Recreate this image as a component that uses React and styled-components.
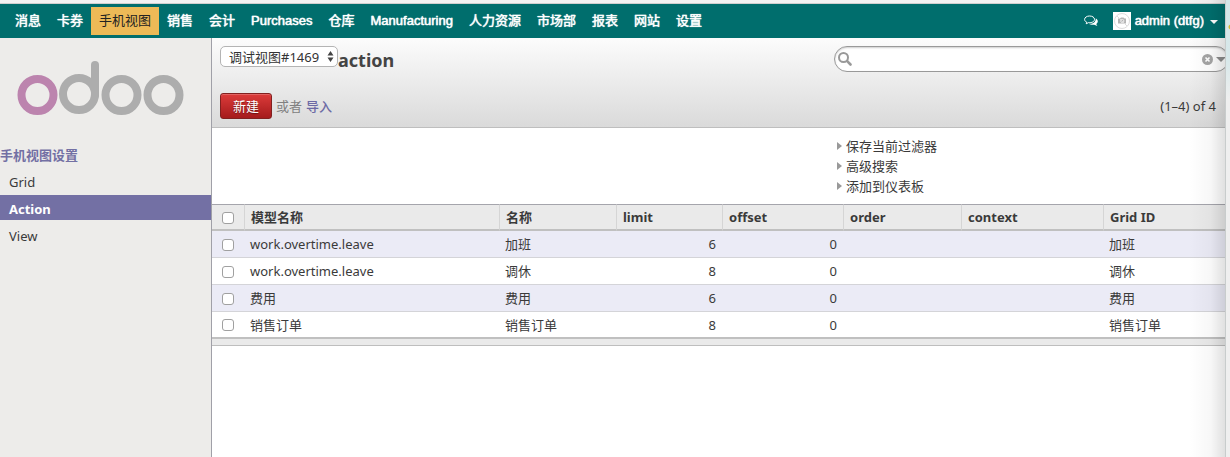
import React from "react";
import styled, { createGlobalStyle, css } from "styled-components";

const GlobalStyle = createGlobalStyle`
  * { box-sizing: border-box; }
  body {
    margin: 0;
    background: #fff;
    color: #3a3a3a;
    font: 13px/20px "Noto Sans", "Noto Sans CJK SC", sans-serif;
  }
  a { color: inherit; text-decoration: none; }
`;

const Window = styled.div`
  display: grid;
  grid-template-columns: minmax(0, 1fr) 5px;
  min-height: 100vh;
`;

const Page = styled.div`
  position: relative;
  display: flex;
  flex-direction: column;
  overflow: hidden;
`;

const EdgeShade = styled.div`
  position: absolute;
  inset: 0 0 0 auto;
  width: 36px;
  pointer-events: none;
  background: linear-gradient(to right, rgba(0, 0, 0, 0), rgba(0, 0, 0, 0.03) 60%, rgba(0, 0, 0, 0.12));
`;

const Backdrop = styled.div`
  border-left: 1px solid #c8cccc;
  background:
    radial-gradient(circle at 5px 27px, #d8b830 2px, transparent 3px),
    linear-gradient(#d3e6e8, #d8e8ea 60px, #efefef 100px);
`;

const TopStrip = styled.div`
  height: 4px;
  background: #f2f2f2;
  border-bottom: 1px solid #d0cfcf;
`;

const NavBar = styled.nav`
  display: flex;
  align-items: center;
  justify-content: space-between;
  height: 34px;
  padding: 0 7px;
  background: #006e6d;
  color: #fff;
  font-family: "Liberation Sans", "Noto Sans CJK SC", sans-serif;
  text-shadow: 0 0 1px currentColor;
`;

const NavGroup = styled.div`
  display: flex;
  align-items: center;
`;

const NavLink = styled.a`
  padding: 4px 8px;
  white-space: nowrap;
  -webkit-text-stroke: ${(p) => (p.$active ? "0" : "thin")};
  ${(p) =>
    p.$active &&
    css`
      background: #edba57;
      color: #222;
      text-shadow: none;
    `}
`;

const UserButton = styled.button`
  display: flex;
  align-items: center;
  gap: 4px;
  padding: 0;
  border: 0;
  background: none;
  color: inherit;
  font: inherit;
  text-shadow: inherit;
  -webkit-text-stroke: thin;
`;

const Messages = styled(UserButton)`
  margin-right: 15px;
`;

const Body = styled.div`
  display: grid;
  grid-template-columns: 212px minmax(0, 1fr);
  flex: 1;
`;

const Sidebar = styled.aside`
  background: #edecea;
  border-right: 1px solid #a0a0a8;
`;

const Logo = styled.a`
  display: block;
  padding: 23px 16px 0;
  height: 105px;
`;

const MenuTitle = styled.h2`
  margin: 0;
  padding: 2px 0 3px;
  color: #7370a4;
  font-size: 13px;
  line-height: 20px;
`;

const MenuLink = styled.a`
  display: block;
  margin-bottom: 2px;
  padding: 4px 9px 1px;
  ${(p) =>
    p.$active &&
    css`
      background: #7370a4;
      color: #fff;
      font-weight: 700;
    `}
`;

const ViewHeader = styled.header`
  display: grid;
  grid-template-columns: minmax(0, 622fr) minmax(0, 391fr);
  align-content: space-between;
  height: 90px;
  padding: 8px 0;
  border-bottom: 1px solid #bebebe;
  background: linear-gradient(#fcfcfc, #dadada);
`;

const TitleRow = styled.div`
  display: flex;
  align-items: flex-start;
  padding-left: 8px;
`;

const SelectWrap = styled.label`
  position: relative;
  display: block;
`;

const DebugSelect = styled.select`
  appearance: none;
  display: block;
  width: 118px;
  height: 21px;
  padding: 0 12px 0 8px;
  border: 1px solid #b4b4b4;
  border-radius: 5px;
  background: #fff;
  color: #333;
  font: inherit;
`;

const SelectArrows = styled.svg`
  position: absolute;
  top: 4px;
  right: 4px;
  pointer-events: none;
`;

const Title = styled.h1`
  margin: 4px 0 0;
  font-size: 18px;
  line-height: 20px;
  color: #444;
`;

const SearchBox = styled.div`
  display: flex;
  align-items: center;
  gap: 3px;
  height: 26px;
  margin-right: -4px;
  padding: 0 2px 0 3px;
  border: 1px solid #999;
  border-radius: 13px;
  background: #fff;
  box-shadow: inset 0 1px 2px rgba(0, 0, 0, 0.2);
`;

const SearchInput = styled.input`
  flex: 1;
  min-width: 0;
  border: 0;
  outline: 0;
  background: none;
  font: inherit;
`;

const IconButton = styled.button`
  display: flex;
  padding: 0;
  border: 0;
  background: none;
`;

const Actions = styled.div`
  display: flex;
  align-items: center;
  gap: 4px;
  padding-left: 8px;
  color: #808080;
`;

const CreateButton = styled.button`
  height: 26px;
  padding: 0 12px;
  border: 1px solid #82201f;
  border-radius: 3px;
  background: linear-gradient(#dc3b3a, #a51b1c);
  box-shadow: inset 0 1px rgba(255, 255, 255, 0.2);
  color: #fff;
  font: inherit;
  text-shadow: 0 1px 1px rgba(0, 0, 0, 0.4);
`;

const ImportLink = styled.a`
  color: #6c6aa5;
  font-weight: 500;
`;

const Pager = styled.div`
  padding-right: 9px;
  text-align: right;
  line-height: 26px;
`;

const Drawer = styled.div`
  display: grid;
  grid-template-columns: minmax(0, 622fr) minmax(0, 391fr);
  padding: 8px 0;
`;

const DrawerList = styled.div`
  grid-column: 2;
  display: flex;
  flex-direction: column;
  align-items: flex-start;
`;

const DrawerButton = styled.button`
  display: flex;
  align-items: center;
  gap: 4px;
  padding: 0 0 0 3px;
  border: 0;
  background: none;
  color: inherit;
  font: inherit;
  line-height: 20px;
`;

const Table = styled.table`
  width: 100%;
  table-layout: fixed;
  border-collapse: separate;
  border-spacing: 0;
`;

const Col = styled.col`
  width: ${(p) => p.$width || "auto"};
`;

const HeadCell = styled.th`
  height: 27px;
  padding: 0 6px;
  border-top: 1px solid #a5a5ac;
  border-bottom: 2px solid #c0c0c0;
  border-left: ${(p) => (p.$first ? "0" : "1px solid #d5d5d5")};
  background: #eaeaea;
  text-align: left;
`;

const Cell = styled.td`
  height: 27px;
  padding: 0 6px;
  border-bottom: 1px solid #d4d4d8;
  text-align: ${(p) => (p.$number ? "right" : "left")};
`;

const Row = styled.tr`
  background: #fff;
  &:nth-child(odd) { background: #ebebf6; }
  &:last-child ${Cell} { border-bottom: 2px solid #c0c0c0; }
`;

const FootCell = styled.td`
  height: 7px;
  padding: 0;
  border-bottom: 1px solid #bebebe;
  background: #eaeaea;
`;

const Check = styled.input`
  appearance: none;
  display: block;
  width: 12px;
  height: 12px;
  margin: 1px 0 0 4px;
  border: 1px solid #a0a0a0;
  border-radius: 3px;
  background: #fff;
`;

const NAV = ["消息", "卡券", "手机视图", "销售", "会计", "Purchases", "仓库", "Manufacturing", "人力资源", "市场部", "报表", "网站", "设置"];
const MENU = ["Grid", "Action", "View"];
const FILTERS = ["保存当前过滤器", "高级搜索", "添加到仪表板"];
const COLUMNS = [
  { label: "模型名称", width: "255px" },
  { label: "名称", width: "117px" },
  { label: "limit", width: "106px", number: true },
  { label: "offset", width: "121px", number: true },
  { label: "order", width: "118px" },
  { label: "context", width: "142px" },
  { label: "Grid ID" },
];
const ROWS = [
  ["work.overtime.leave", "加班", "6", "0", "", "", "加班"],
  ["work.overtime.leave", "调休", "8", "0", "", "", "调休"],
  ["费用", "费用", "6", "0", "", "", "费用"],
  ["销售订单", "销售订单", "8", "0", "", "", "销售订单"],
];

function OdooLogo() {
  return (
    <svg width="170" height="56" viewBox="16 61 170 56" fill="none" stroke="#adadad" strokeWidth="8" role="img" aria-label="odoo">
      <circle cx="37.5" cy="95" r="16" stroke="#bc84ae" />
      <circle cx="79" cy="94" r="16" />
      <path d="M95 65v30" strokeLinecap="round" />
      <circle cx="121.5" cy="95" r="16" />
      <circle cx="163.5" cy="95" r="16" />
    </svg>
  );
}

function CommentsIcon() {
  return (
    <svg width="14" height="12" viewBox="0 0 14 12" fill="none">
      <path d="M5.500 1C2.800 1 .6 2.500 .6 4.400c0 1.200.8 2.200 2.100 2.800L2.200 8.800l2.300-1.200c3.400 .4 6-1 6-3.200S8.200 1 5.500 1z" stroke="#fff" />
      <path d="M11.800 3.400c1.300.6 2 1.600 2 2.800 0 1.100-.6 2-1.600 2.700l1.200 2.200-3.200-1.400c-2 .3-4-.1-5.200-1C9 9 11.800 7 11.800 3.400z" fill="#fff" />
    </svg>
  );
}

function Avatar() {
  return (
    <svg width="18" height="18" viewBox="0 0 18 18" fill="none">
      <path d="M0 0h18v18H0z" fill="#fff" />
      <path d="M5 6.500h2l1-1h2.500l1 1H13v5H5z" fill="#b5b5b5" />
      <circle cx="9.300" cy="9" r="1.600" stroke="#eee" />
      <circle cx="9" cy="9" r="7.500" stroke="#ddd" />
      <path d="M4 4l10 10" stroke="#ddd" />
    </svg>
  );
}

export default function App() {
  return (
    <>
      <GlobalStyle />
      <Window>
        <Page>
          <TopStrip />
          <NavBar>
            <NavGroup>
              {NAV.map((name) => (
                <NavLink key={name} href="#" $active={name === "手机视图"}>{name}</NavLink>
              ))}
            </NavGroup>
            <NavGroup>
              <Messages aria-label="Messages"><CommentsIcon /></Messages>
              <UserButton>
                <Avatar />
                admin (dtfg)
                <svg width="10" height="6" viewBox="0 0 10 6"><path d="M2 2h8L6 6z" fill="#fff" /></svg>
              </UserButton>
            </NavGroup>
          </NavBar>
          <Body>
            <Sidebar>
              <Logo href="#"><OdooLogo /></Logo>
              <MenuTitle>手机视图设置</MenuTitle>
              {MENU.map((name) => (
                <MenuLink key={name} href="#" $active={name === "Action"}>{name}</MenuLink>
              ))}
            </Sidebar>
            <main>
              <ViewHeader>
                <TitleRow>
                  <SelectWrap>
                    <DebugSelect aria-label="调试视图">
                      <option>调试视图#1469</option>
                    </DebugSelect>
                    <SelectArrows width="7" height="13" viewBox="0 0 7 13" fill="#444">
                      <path d="M3.500 1L6.500 5.500h-6zM3.500 12L.5 7.500h6z" />
                    </SelectArrows>
                  </SelectWrap>
                  <Title>action</Title>
                </TitleRow>
                <SearchBox>
                  <svg width="14" height="14" viewBox="0 0 14 14" fill="none" stroke="#999" strokeLinecap="round">
                    <circle cx="5.500" cy="5.500" r="4.500" strokeWidth="2" />
                    <path d="M9.200 9.200l3.300 3.300" strokeWidth="2.600" />
                  </svg>
                  <SearchInput type="text" aria-label="搜索" />
                  <IconButton aria-label="清除">
                    <svg width="11" height="11" viewBox="0 0 11 11">
                      <circle cx="5.500" cy="5.500" r="5.500" fill="#a5a5a5" />
                      <path d="M3.500 3.500l4 4M7.500 3.500l-4 4" stroke="#fff" strokeWidth="1.600" />
                    </svg>
                  </IconButton>
                  <IconButton aria-label="展开">
                    <svg width="10" height="5" viewBox="0 0 10 5"><path d="M0 0h10L5 5z" fill="#8c8c8c" /></svg>
                  </IconButton>
                </SearchBox>
                <Actions>
                  <CreateButton>新建</CreateButton>
                  <span>或者</span>
                  <ImportLink href="#">导入</ImportLink>
                </Actions>
                <Pager>(1–4) of 4</Pager>
              </ViewHeader>
              <Drawer>
                <DrawerList>
                  {FILTERS.map((name) => (
                    <DrawerButton key={name}>
                      <svg width="5" height="8" viewBox="0 0 5 8"><path d="M0 0l5 4-5 4z" fill="#999" /></svg>
                      {name}
                    </DrawerButton>
                  ))}
                </DrawerList>
              </Drawer>
              <Table>
                <colgroup>
                  <Col $width="32px" />
                  {COLUMNS.map((c) => <Col key={c.label} $width={c.width} />)}
                </colgroup>
                <thead>
                  <tr>
                    <HeadCell $first><Check type="checkbox" aria-label="全选" /></HeadCell>
                    {COLUMNS.map((c) => <HeadCell key={c.label}>{c.label}</HeadCell>)}
                  </tr>
                </thead>
                <tbody>
                  {ROWS.map((row, i) => (
                    <Row key={i}>
                      <Cell><Check type="checkbox" aria-label={row[1]} /></Cell>
                      {row.map((value, j) => (
                        <Cell key={j} $number={COLUMNS[j].number}>{value}</Cell>
                      ))}
                    </Row>
                  ))}
                </tbody>
                <tfoot>
                  <tr><FootCell colSpan={8} /></tr>
                </tfoot>
              </Table>
            </main>
          </Body>
          <EdgeShade />
        </Page>
        <Backdrop />
      </Window>
    </>
  );
}
